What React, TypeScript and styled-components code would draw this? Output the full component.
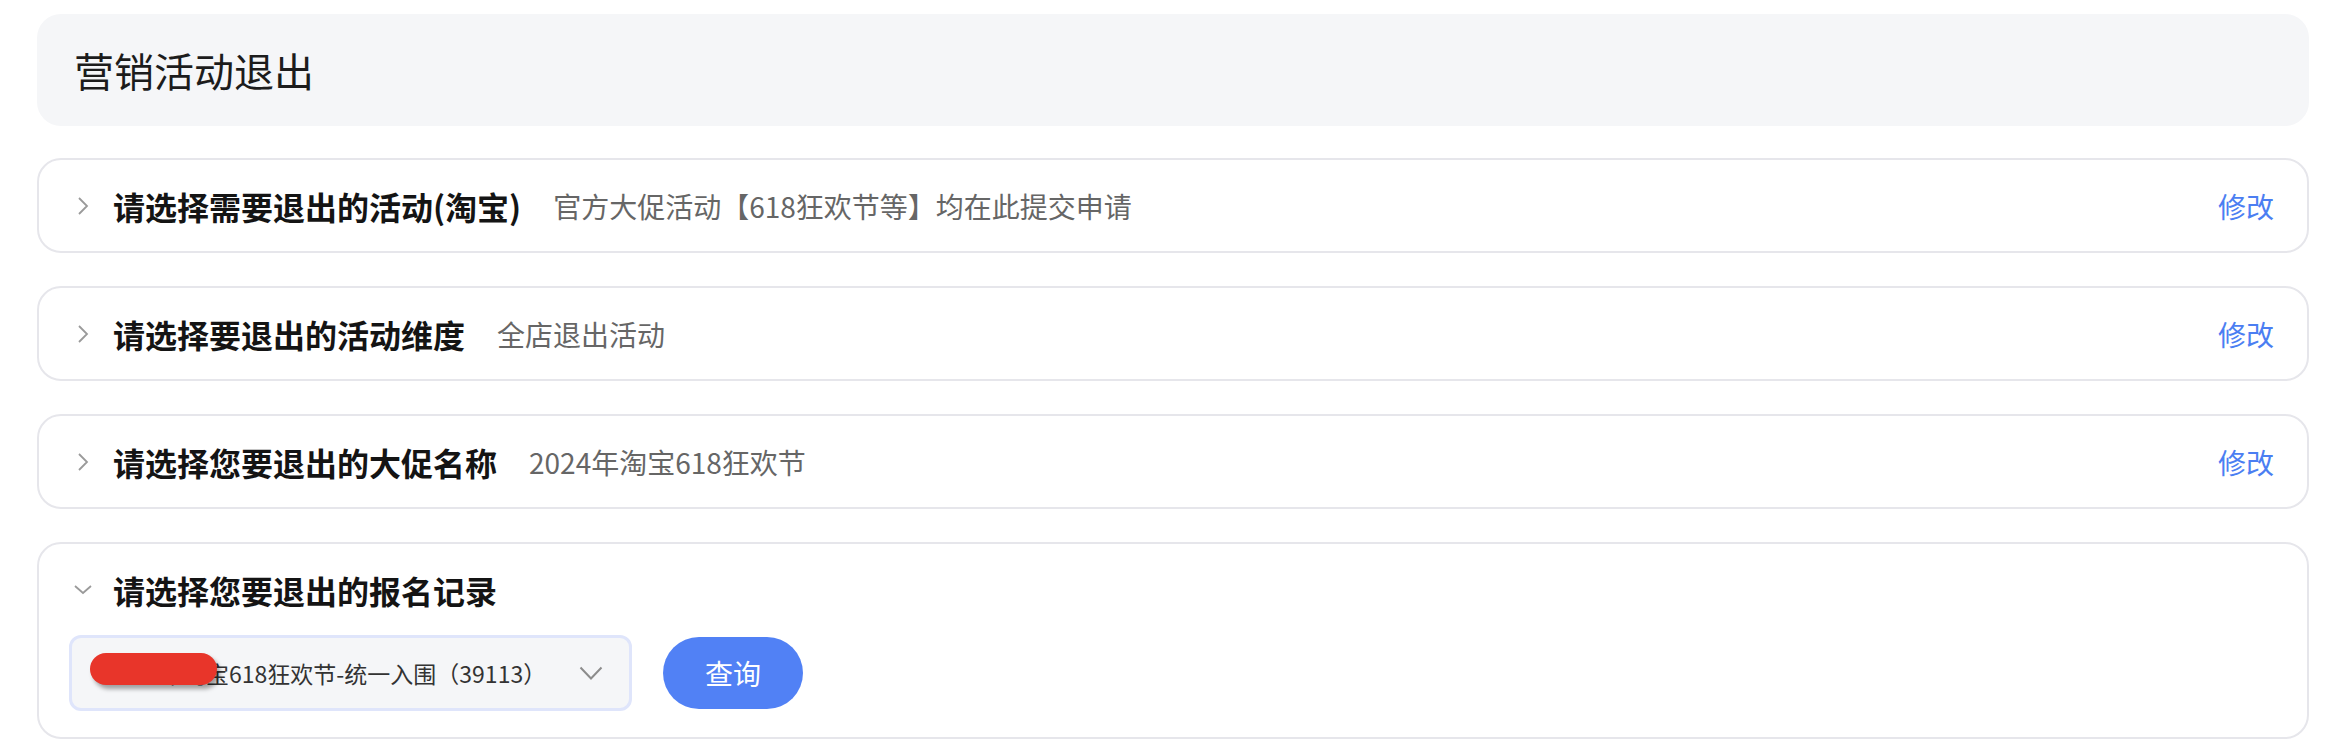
import { createGlobalStyle } from 'styled-components';
import styled from 'styled-components';

const GlobalStyle = createGlobalStyle`
  html, body {
    margin: 0;
    padding: 0;
    background: #ffffff;
    font-family: 'Noto Sans CJK SC', 'Noto Sans', sans-serif;
  }
`;

const STEPS = [
  { title: '请选择需要退出的活动(淘宝)', value: '官方大促活动【618狂欢节等】均在此提交申请' },
  { title: '请选择要退出的活动维度', value: '全店退出活动' },
  { title: '请选择您要退出的大促名称', value: '2024年淘宝618狂欢节' },
];

function Chevron({ open }: { open?: boolean }) {
  if (open) {
    return (
      <svg width="20" height="12" viewBox="0 0 20 12">
        <path d="M2 2 L10 9 L18 2" fill="none" stroke="#9a9a9a" strokeWidth="1.8" />
      </svg>
    );
  }
  return (
    <svg width="12" height="20" viewBox="0 0 12 20">
      <path d="M2 2 L10 10 L2 18" fill="none" stroke="#9a9a9a" strokeWidth="1.8" />
    </svg>
  );
}

function App() {
  return (
    <>
      <GlobalStyle />
      <Styled.Page>
        <Styled.Header>营销活动退出</Styled.Header>
        {STEPS.map((step) => (
          <Styled.Card key={step.title}>
            <Styled.Row>
              <Styled.Arrow>
                <Chevron />
              </Styled.Arrow>
              <Styled.Title>{step.title}</Styled.Title>
              <Styled.Value>{step.value}</Styled.Value>
              <Styled.Edit>修改</Styled.Edit>
            </Styled.Row>
          </Styled.Card>
        ))}
        <Styled.Card>
          <Styled.Row>
            <Styled.Arrow $open>
              <Chevron open />
            </Styled.Arrow>
            <Styled.Title>请选择您要退出的报名记录</Styled.Title>
          </Styled.Row>
          <Styled.Body>
            <Styled.Select>
              <Styled.SelectText>2024年淘宝618狂欢节-统一入围（39113）</Styled.SelectText>
              <svg width="24" height="14" viewBox="0 0 24 14">
                <path d="M1.5 1.5 L12 12.5 L22.5 1.5" fill="none" stroke="#8c8c8c" strokeWidth="2" />
              </svg>
              <Styled.Redact />
            </Styled.Select>
            <Styled.Button type="button">查询</Styled.Button>
          </Styled.Body>
        </Styled.Card>
      </Styled.Page>
    </>
  );
}

const Styled = {
  Page: styled.main`
    display: flex;
    flex-direction: column;
    gap: 33px;
    padding: 14px 27px 0 37px;
  `,
  Header: styled.header`
    display: flex;
    align-items: center;
    height: 112px;
    padding-left: 37px;
    margin-bottom: -1px;
    border-radius: 24px;
    background: #f5f6f8;
    font-size: 40px;
    color: #1c1c1c;
  `,
  Card: styled.section`
    border: 2px solid #e6e6eb;
    border-radius: 24px;
    background: #ffffff;
  `,
  Row: styled.div`
    display: flex;
    align-items: center;
    height: 91px;
    padding: 0 33px 0 38px;
  `,
  Arrow: styled.span<{ $open?: boolean }>`
    display: flex;
    align-items: center;
    justify-content: center;
    width: ${({ $open }) => ($open ? '20px' : '12px')};
    margin-left: ${({ $open }) => ($open ? '-4px' : '0')};
    margin-right: ${({ $open }) => ($open ? '20px' : '24px')};
  `,
  Title: styled.h2`
    margin: 0;
    font-size: 32px;
    font-weight: 700;
    color: #141414;
  `,
  Value: styled.span`
    margin-left: 32px;
    font-size: 28px;
    color: #666666;
  `,
  Edit: styled.a`
    margin-left: auto;
    font-size: 28px;
    color: #4b7ef2;
    cursor: pointer;
  `,
  Body: styled.div`
    display: flex;
    align-items: center;
    gap: 31px;
    padding: 0 30px 26px 30px;
  `,
  Select: styled.div`
    position: relative;
    display: flex;
    align-items: center;
    justify-content: space-between;
    box-sizing: border-box;
    width: 563px;
    height: 76px;
    padding: 0 26px 0 37px;
    border: 3px solid #dfe5fb;
    border-radius: 12px;
    background: #f5f6f8;
  `,
  SelectText: styled.span`
    font-size: 23px;
    color: #333333;
    white-space: nowrap;
  `,
  Redact: styled.span`
    position: absolute;
    display: block;
    left: 18px;
    top: 15px;
    width: 127px;
    height: 32px;
    border-radius: 16px;
    background: #e8352a;
    box-shadow: 3px 4px 4px rgba(0, 0, 0, 0.35);
  `,
  Button: styled.button`
    width: 140px;
    height: 72px;
    border: none;
    border-radius: 36px;
    background: #5181f5;
    color: #ffffff;
    font-family: inherit;
    font-size: 28px;
    cursor: pointer;
  `,
};

export default App;
